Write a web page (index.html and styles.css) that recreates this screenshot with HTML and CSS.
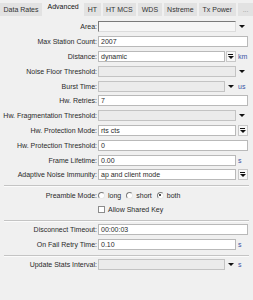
FILE: index.html
```html
<!DOCTYPE html>
<html>
<head>
<meta charset="utf-8">
<link rel="stylesheet" href="styles.css">
</head>
<body>
<div class="tabs">
  <div class="tab">Data Rates</div>
  <div class="tab active">Advanced</div>
  <div class="tab">HT</div>
  <div class="tab">HT MCS</div>
  <div class="tab">WDS</div>
  <div class="tab">Nstreme</div>
  <div class="tab">Tx Power</div>
  <div class="tab more">...</div>
</div>
<div class="panel">
  <div class="row"><span class="lbl">Area:</span><div class="ctl"><div class="box sunken"></div><span class="end"><i class="tri"></i></span></div></div>
  <div class="row"><span class="lbl">Max Station Count:</span><div class="ctl"><div class="box">2007</div></div></div>
  <div class="row"><span class="lbl">Distance:</span><div class="ctl"><div class="box">dynamic</div><span class="mid"><span class="btn"><i class="bar"></i><i class="tri"></i></span></span><span class="end unit">km</span></div></div>
  <div class="row"><span class="lbl">Noise Floor Threshold:</span><div class="ctl"><div class="box off"></div><span class="end"><i class="tri"></i></span></div></div>
  <div class="row"><span class="lbl">Burst Time:</span><div class="ctl"><div class="box off"></div><span class="mid"><i class="tri"></i></span><span class="end unit">us</span></div></div>
  <div class="row"><span class="lbl">Hw. Retries:</span><div class="ctl"><div class="box">7</div></div></div>
  <div class="row"><span class="lbl">Hw. Fragmentation Threshold:</span><div class="ctl"><div class="box off"></div><span class="end"><i class="tri"></i></span></div></div>
  <div class="row"><span class="lbl">Hw. Protection Mode:</span><div class="ctl"><div class="box">rts cts</div><span class="end"><span class="btn"><i class="bar"></i><i class="tri"></i></span></span></div></div>
  <div class="row"><span class="lbl">Hw. Protection Threshold:</span><div class="ctl"><div class="box">0</div></div></div>
  <div class="row"><span class="lbl">Frame Lifetime:</span><div class="ctl"><div class="box">0.00</div><span class="end unit">s</span></div></div>
  <div class="row"><span class="lbl">Adaptive Noise Immunity:</span><div class="ctl"><div class="box">ap and client mode</div><span class="end"><span class="btn"><i class="bar"></i><i class="tri"></i></span></span></div></div>

  <div class="sep"></div>

  <div class="row"><span class="lbl">Preamble Mode:</span>
    <div class="opts">
      <span class="opt"><i class="radio"></i>long</span>
      <span class="opt"><i class="radio"></i>short</span>
      <span class="opt"><i class="radio on"></i>both</span>
    </div>
  </div>
  <div class="row"><span class="lbl"></span>
    <div class="opts"><span class="opt"><i class="check"></i>Allow Shared Key</span></div>
  </div>

  <div class="sep"></div>

  <div class="row"><span class="lbl">Disconnect Timeout:</span><div class="ctl"><div class="box">00:00:03</div></div></div>
  <div class="row"><span class="lbl">On Fail Retry Time:</span><div class="ctl"><div class="box">0.10</div><span class="end unit">s</span></div></div>

  <div class="sep"></div>

  <div class="row"><span class="lbl">Update Stats Interval:</span><div class="ctl"><div class="box off"></div><span class="mid"><i class="tri"></i></span><span class="end unit">s</span></div></div>
</div>
</body>
</html>
```
FILE: styles.css
```css
html, body {
  margin: 0;
  padding: 0;
}
body {
  width: 253px;
  height: 300px;
  overflow: hidden;
  background: #f0f0f0;
  font-family: "Liberation Sans", Arial, sans-serif;
  font-size: 7px;
  color: #2a2a2a;
}
.tabs {
  display: flex;
  align-items: flex-end;
  gap: 2px;
  height: 16px;
}
.tab {
  height: 13px;
  line-height: 13px;
  padding: 0 3.5px;
  background: #e2e2e2;
  color: #333;
  white-space: nowrap;
}
.tab.active {
  height: 16px;
  line-height: 14px;
  background: #f0f0f0;
  color: #111;
}
.tab.more {
  min-width: 16px;
  box-sizing: border-box;
  text-align: center;
  color: #999;
}
.panel {
  padding-top: 3.6px;
}
.row {
  display: grid;
  grid-template-columns: 97px 1fr;
  column-gap: 1px;
  align-items: center;
  height: 14.8px;
}
.lbl {
  text-align: right;
  white-space: nowrap;
}
.ctl {
  display: flex;
  align-items: center;
  width: 150px;
  height: 100%;
}
.box {
  flex: 1;
  height: 11px;
  box-sizing: border-box;
  background: #fff;
  border: 1px solid #b9b9b9;
  line-height: 9px;
  padding-left: 2px;
  white-space: nowrap;
  overflow: hidden;
}
.box.off {
  background: #ebebeb;
  border-color: #c3c3c3;
}
.box.sunken {
  background: #f6f6f6;
  border-color: #7a7a7a #dcdcdc #dcdcdc #7a7a7a;
}
.mid {
  width: 11px;
  display: flex;
  justify-content: center;
  align-items: center;
}
.end {
  width: 12px;
  display: flex;
  justify-content: center;
  align-items: center;
}
.end.unit {
  justify-content: flex-start;
  padding-left: 2px;
  box-sizing: border-box;
  color: #3a55a5;
}
.tri {
  display: block;
  width: 0;
  height: 0;
  border-left: 3px solid transparent;
  border-right: 3px solid transparent;
  border-top: 3px solid #111;
}
.btn {
  width: 10px;
  height: 11px;
  box-sizing: border-box;
  border: 1px solid #c8c8c8;
  background: #f7f7f7;
  display: flex;
  flex-direction: column;
  align-items: center;
  justify-content: center;
  gap: 1px;
  margin-left: 1px;
}
.mid .btn {
  margin-left: 0;
}
.bar {
  display: block;
  width: 5px;
  height: 1px;
  background: #111;
}
.sep {
  height: 0;
  border-top: 1px solid #c4c4c4;
  border-bottom: 1px solid #fbfbfb;
  margin: 2.7px 4px 0.6px 4px;
}
.opts {
  display: flex;
  align-items: center;
  gap: 5px;
}
.opt {
  display: flex;
  align-items: center;
  gap: 3px;
  white-space: nowrap;
}
.radio {
  display: block;
  width: 7px;
  height: 7px;
  box-sizing: border-box;
  border-radius: 50%;
  border: 1px solid;
  border-color: #7d7d7d #e8e8e8 #e8e8e8 #7d7d7d;
  background: #fff;
  position: relative;
}
.radio.on::after {
  content: "";
  position: absolute;
  left: 1.5px;
  top: 1.5px;
  width: 2px;
  height: 2px;
  border-radius: 50%;
  background: #111;
}
.check {
  display: block;
  width: 7px;
  height: 7px;
  box-sizing: border-box;
  border: 1px solid #8c8c8c;
  background: #fff;
}
```
